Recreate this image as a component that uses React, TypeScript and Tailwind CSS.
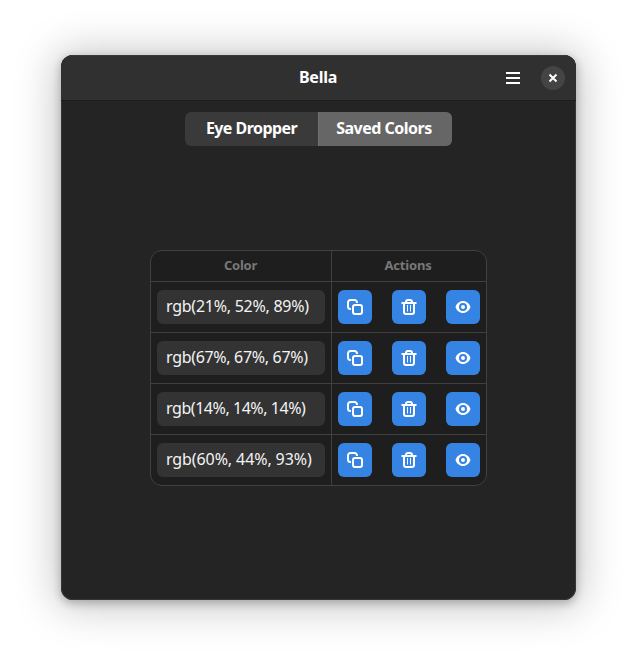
const colors = [
  { value: 'rgb(21%, 52%, 89%)', tracking: 'tracking-[-0.26px]' },
  { value: 'rgb(67%, 67%, 67%)', tracking: 'tracking-[-0.32px]' },
  { value: 'rgb(14%, 14%, 14%)', tracking: 'tracking-[-0.45px]' },
  { value: 'rgb(60%, 44%, 93%)', tracking: 'tracking-[-0.1px]' },
];

function CopyIcon() {
  return (
    <svg width="16" height="16" viewBox="0 0 16 16" fill="none" stroke="white" strokeWidth="2">
      <path d="M4 10H3.500A2.500 2.500 0 0 1 1 7.500V3.500A2.500 2.500 0 0 1 3.500 1H7.500A2.500 2.500 0 0 1 10 3.500V4" />
      <rect x="6" y="6" width="9" height="9" rx="2" />
    </svg>
  );
}

function TrashIcon() {
  return (
    <svg width="16" height="16" viewBox="0 0 16 16" fill="none" stroke="white" strokeWidth="2">
      <path d="M.5 4h15" />
      <path d="M5 4V3a2 2 0 0 1 2-2h2a2 2 0 0 1 2 2v1" />
      <path d="M3 4v9a2 2 0 0 0 2 2h6a2 2 0 0 0 2-2V4" />
      <path d="M6.500 6v6.500M9.500 6v6.500" strokeWidth="1" />
    </svg>
  );
}

function EyeIcon() {
  return (
    <svg width="16" height="16" viewBox="0 0 16 16" fill="white">
      <path
        fillRule="evenodd"
        d="M8 2C4.600 2 1.600 4.400.5 8c1.100 3.600 4.100 6 7.500 6s6.400-2.400 7.500-6C14.400 4.400 11.400 2 8 2Zm0 2a4 4 0 1 1 0 8 4 4 0 0 1 0-8Z"
      />
      <circle cx="8" cy="8" r="2" />
    </svg>
  );
}

function ActionButton({ label, children }: { label: string; children: React.ReactNode }) {
  return (
    <button aria-label={label} className="flex size-[34px] items-center justify-center rounded-[6px] bg-[#3584e4]">
      {children}
    </button>
  );
}

export default function App() {
  return (
    <div className="h-[667px] w-[637px] overflow-hidden bg-white pt-[55px] pl-[61px] font-['Noto_Sans',sans-serif]">
      <div className="flex h-[545px] w-[515px] flex-col overflow-hidden rounded-[12px] bg-[#242424] shadow-[0_3px_9px_1px_rgba(0,0,0,0.22),0_2px_42px_6px_rgba(0,0,0,0.22)] ring-1 ring-inset ring-[#343636]">
        <header className="grid h-[46px] shrink-0 grid-cols-[1fr_auto_1fr] items-center border-b border-[#1e1e1e] bg-[#303030] pr-[11px] shadow-[inset_0_1px_#393b3b]">
          <span />
          <h1 className="pb-[2px] pl-[10px] text-[16px] leading-[22px] font-bold tracking-[-0.25px] text-white">Bella</h1>
          <div className="flex items-center justify-end gap-[21px]">
            <button aria-label="Menu" className="flex h-3 w-[14px] flex-col justify-between">
              <span className="h-[2px] w-full bg-white" />
              <span className="h-[2px] w-full bg-white" />
              <span className="h-[2px] w-full bg-white" />
            </button>
            <button aria-label="Close" className="flex size-6 items-center justify-center rounded-full bg-[#444]">
              <svg width="16" height="16" viewBox="0 0 16 16" stroke="white" strokeWidth="2">
                <path d="M4.500 4.500l7 7M11.500 4.500l-7 7" />
              </svg>
            </button>
          </div>
        </header>

        <main className="flex flex-1 flex-col items-center pt-[11px]">
          <nav className="flex h-[34px] w-[267px] overflow-hidden rounded-[6px] bg-[#3a3a3a] text-[16px] leading-[32px] font-bold whitespace-nowrap text-white">
            <button className="flex w-[133px] justify-center pb-[2px] tracking-[-0.55px]">Eye Dropper</button>
            <button className="flex flex-1 justify-center border-l border-[#727272] bg-[#666] pr-[3px] pb-[2px] tracking-[-0.5px]">
              Saved Colors
            </button>
          </nav>

          <section className="mt-[104px] w-[337px] overflow-hidden rounded-[12px] border border-[#404040] bg-[#1e1e1e]">
            <div className="flex h-[30px] text-[13px] leading-[28px] font-bold text-[#787878]">
              <div className="w-[181px] border-r border-[#404040] pr-px text-center tracking-[-0.25px]">Color</div>
              <div className="flex-1 pr-[2px] text-center tracking-[-0.2px]">Actions</div>
            </div>
            {colors.map(({ value, tracking }) => (
              <div key={value} className="flex h-[51px] border-t border-[#404040]">
                <div className="flex w-[181px] items-center border-r border-[#404040] pl-[6px]">
                  <div className="h-[34px] w-[168px] rounded-[6px] bg-[#333] pl-[9px] text-[16px] leading-[32px] whitespace-nowrap text-[#f4f4f4]">
                    <span className={tracking}>{value}</span>
                  </div>
                </div>
                <div className="flex flex-1 items-center justify-between px-[6px]">
                  <ActionButton label="Copy">
                    <CopyIcon />
                  </ActionButton>
                  <ActionButton label="Delete">
                    <TrashIcon />
                  </ActionButton>
                  <ActionButton label="Preview">
                    <EyeIcon />
                  </ActionButton>
                </div>
              </div>
            ))}
          </section>
        </main>
      </div>
    </div>
  );
}
